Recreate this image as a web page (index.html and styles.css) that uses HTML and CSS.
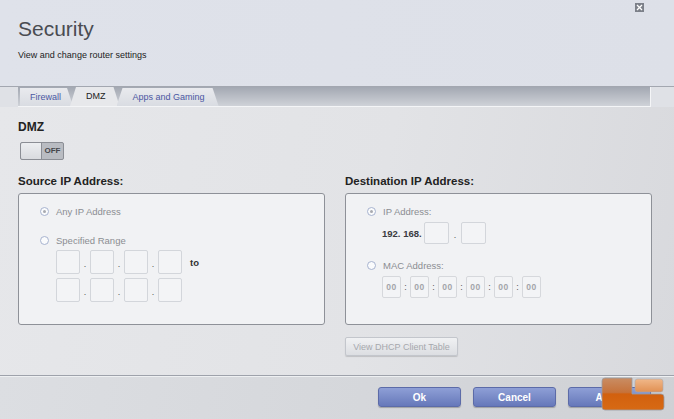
FILE: index.html
```html
<!DOCTYPE html>
<html lang="en">
<head>
  <meta charset="UTF-8">
  <title>Security</title>
  <link rel="stylesheet" href="styles.css">
</head>
<body>
  <div class="window">
    <!-- Header -->
    <header class="top">
      <svg class="close" width="9" height="9" viewBox="0 0 9 9">
        <rect width="9" height="9" fill="#7c8089"/>
        <path d="M2 2 L7 7 M7 2 L2 7" stroke="#fff" stroke-width="1.3"/>
      </svg>
      <h1>Security</h1>
      <p>View and change router settings</p>
    </header>

    <!-- Tabs -->
    <nav class="tabbar">
      <a class="tab first">Firewall</a>
      <a class="tab active">DMZ</a>
      <a class="tab">Apps and Gaming</a>
    </nav>

    <!-- Content -->
    <main class="content">
      <h2>DMZ</h2>
      <div class="toggle"><span class="knob"></span><span class="state">OFF</span></div>

      <div class="columns">
        <section>
          <h3>Source IP Address:</h3>
          <div class="box">
            <label class="option"><span class="radio checked"></span>Any IP Address</label>
            <label class="option second"><span class="radio"></span>Specified Range</label>
            <div class="range">
              <div class="ip-row">
                <span class="field"></span><i>.</i><span class="field"></span><i>.</i><span class="field"></span><i>.</i><span class="field"></span>
                <b class="to">to</b>
              </div>
              <div class="ip-row">
                <span class="field"></span><i>.</i><span class="field"></span><i>.</i><span class="field"></span><i>.</i><span class="field"></span>
              </div>
            </div>
          </div>
        </section>

        <section>
          <h3>Destination IP Address:</h3>
          <div class="box">
            <label class="option"><span class="radio checked"></span>IP Address:</label>
            <div class="dest-ip">
              <b>192. 168.</b><span class="field wide"></span><i>.</i><span class="field wide"></span>
            </div>
            <label class="option mac-label"><span class="radio"></span>MAC Address:</label>
            <div class="mac">
              <span class="mac-field">00</span><i>:</i><span class="mac-field">00</span><i>:</i><span class="mac-field">00</span><i>:</i><span class="mac-field">00</span><i>:</i><span class="mac-field">00</span><i>:</i><span class="mac-field">00</span>
            </div>
          </div>
          <button class="dhcp">View DHCP Client Table</button>
        </section>
      </div>
    </main>

    <!-- Footer -->
    <footer class="actions">
      <button class="btn">Ok</button>
      <button class="btn">Cancel</button>
      <button class="btn">Apply</button>
    </footer>

    <svg class="watermark" width="64" height="34" viewBox="0 0 64 34">
      <defs>
        <linearGradient id="lr-dark" x1="0" y1="0" x2="0" y2="1">
          <stop offset="0" stop-color="#c98d64"/>
          <stop offset="0.45" stop-color="#c6723a"/>
          <stop offset="0.5" stop-color="#d2600e"/>
          <stop offset="1" stop-color="#d76a14"/>
        </linearGradient>
        <linearGradient id="lr-light" x1="0" y1="0" x2="0" y2="1">
          <stop offset="0" stop-color="#f0b88a"/>
          <stop offset="1" stop-color="#e19052"/>
        </linearGradient>
      </defs>
      <path d="M1 4 Q1 1 4 1 H31 V17 H60 Q63 17 63 20 V30 Q63 33 60 33 H4 Q1 33 1 30 Z" fill="url(#lr-dark)" stroke="#9a9ca2" stroke-width="0.8"/>
      <rect x="34" y="2" width="28" height="13" rx="2.5" fill="url(#lr-light)" stroke="#a8aab0" stroke-width="0.6"/>
    </svg>
  </div>
</body>
</html>
```

FILE: styles.css
```css
/* General Styles */
* {
  margin: 0;
  padding: 0;
  box-sizing: border-box;
}

body {
  font-family: "Liberation Sans", Arial, sans-serif;
  background-color: #dfe1e6;
  color: #333;
}

.window {
  position: relative;
  width: 674px;
  height: 419px;
  overflow: hidden;
}

/* Header */
.top {
  position: relative;
  height: 87px;
  padding: 17px 18px 0;
  background: linear-gradient(90deg, #dfe2ea, #dde0e8);
  border-bottom: 1px solid #a3a7b0;
}

.top h1 {
  font-size: 21px;
  font-weight: normal;
  line-height: 24px;
  color: #4a4c52;
}

.top p {
  margin-top: 8px;
  font-size: 9px;
  line-height: 12px;
  color: #222;
}

.close {
  position: absolute;
  top: 3px;
  right: 30px;
}

/* Tabs */
.tabbar {
  display: flex;
  align-items: flex-end;
  height: 20px;
  margin: 0 23px 0 18px;
  padding-left: 2px;
  background: linear-gradient(#a3a8b2, #cfd2d8);
  border-right: 1px solid #f4f5f7;
  border-bottom: 1px solid #f4f5f7;
}

.tab {
  display: block;
  height: 18px;
  padding: 0 14px 0 16px;
  margin-right: -3px;
  font-size: 9px;
  line-height: 19px;
  color: #4b57a3;
  background: linear-gradient(#e9eaee, #d9dce2);
  clip-path: polygon(0 100%, 6px 0, calc(100% - 6px) 0, 100% 100%);
}

.tab.first {
  padding: 0 12px 0 10px;
  clip-path: polygon(0 100%, 0 0, calc(100% - 6px) 0, 100% 100%);
}

.tab.active {
  color: #222;
  background: #e7e8eb;
  padding: 0 14px 0 16px;
  height: 19px;
}

/* Content */
.content {
  height: 268px;
  padding: 13px 22px 0 18px;
  background: linear-gradient(100deg, #e6e7ea 0%, #e2e3e6 55%, #d8d9dd 100%);
}

.content h2 {
  font-size: 12px;
  line-height: 14px;
  color: #222;
}

.toggle {
  display: flex;
  width: 44px;
  height: 18px;
  margin: 8px 0 0 2px;
  border: 1px solid #8b8e95;
  border-radius: 2px;
  background: #b9bcc2;
}

.toggle .knob {
  width: 21px;
  background: linear-gradient(#eceef1, #d9dbdf);
  border-right: 1px solid #8b8e95;
  border-radius: 2px 0 0 2px;
}

.toggle .state {
  flex: 1;
  font-size: 8px;
  font-weight: bold;
  line-height: 16px;
  text-align: center;
  color: #45474c;
}

.columns {
  display: grid;
  grid-template-columns: 307px 307px;
  gap: 20px;
  margin-top: 14px;
}

.columns h3 {
  font-size: 11.5px;
  line-height: 14px;
  color: #222;
}

.box {
  height: 132px;
  margin-top: 5px;
  padding: 12px 0 0 21px;
  background: #f1f2f4;
  border: 1px solid #8e9198;
  border-radius: 3px;
}

.option {
  display: flex;
  align-items: center;
  gap: 7px;
  height: 10px;
  font-size: 9.5px;
  color: #8b8d92;
}

.option.second {
  margin-top: 19px;
}

.radio {
  position: relative;
  width: 9px;
  height: 9px;
  border: 1px solid #a7b3cf;
  border-radius: 50%;
  background: #fafbfc;
}

.radio.checked::after {
  content: "";
  position: absolute;
  top: 2px;
  left: 2px;
  width: 3px;
  height: 3px;
  border-radius: 50%;
  background: #a8aab0;
}

.range {
  margin: 5px 0 0 16px;
}

.ip-row {
  display: flex;
  align-items: center;
  height: 24px;
  margin-bottom: 4px;
}

.field {
  width: 24px;
  height: 24px;
  background: #f3f4f6;
  border: 1px solid #d3d6db;
  border-radius: 2px;
}

.ip-row i,
.dest-ip i,
.mac i {
  width: 10px;
  font-style: normal;
  font-size: 9px;
  text-align: center;
  color: #555;
  padding-top: 4px;
}

.to {
  margin-left: 8px;
  font-size: 9.5px;
  color: #333;
}

.dest-ip {
  display: flex;
  align-items: center;
  margin: 6px 0 0 15px;
  height: 22px;
}

.dest-ip b {
  width: 42px;
  font-size: 9.5px;
  color: #3a3b3f;
}

.field.wide {
  width: 25px;
  height: 22px;
}

.dest-ip i {
  width: 12px;
}

.option.mac-label {
  margin-top: 16px;
}

.mac {
  display: flex;
  align-items: center;
  margin: 6px 0 0 15px;
  height: 22px;
}

.mac-field {
  width: 19px;
  height: 22px;
  font-size: 8.5px;
  font-weight: bold;
  line-height: 21px;
  text-align: center;
  letter-spacing: 0.5px;
  color: #a3a5aa;
  background: #f3f4f6;
  border: 1px solid #d6d8dc;
  border-radius: 2px;
}

.mac i {
  width: 9px;
  padding-top: 0;
}

.dhcp {
  display: block;
  width: 113px;
  height: 19px;
  margin-top: 12px;
  font-family: inherit;
  font-size: 9px;
  color: #a6a8ad;
  background: linear-gradient(#f0f1f3, #dcdee2);
  border: 1px solid #c3c6cc;
  border-radius: 2px;
  box-shadow: 0 1px 1px rgba(0, 0, 0, 0.15);
}

/* Footer */
.actions {
  display: flex;
  justify-content: flex-end;
  gap: 12px;
  height: 44px;
  padding: 11px 23px 0 0;
  background: linear-gradient(100deg, #dcdee2, #cfd1d5);
  border-top: 1px solid #9ea2ab;
  box-shadow: inset 0 1px 0 #eef0f2;
}

.btn {
  width: 83px;
  height: 20px;
  font-family: inherit;
  font-size: 10px;
  font-weight: bold;
  color: #fff;
  background: linear-gradient(#8e9fd6, #6678ba);
  border: 1px solid #5c6ba8;
  border-radius: 3px;
  box-shadow: 0 1px 1px rgba(0, 0, 0, 0.25);
}

.watermark {
  position: absolute;
  right: 9px;
  bottom: 8px;
}
```
